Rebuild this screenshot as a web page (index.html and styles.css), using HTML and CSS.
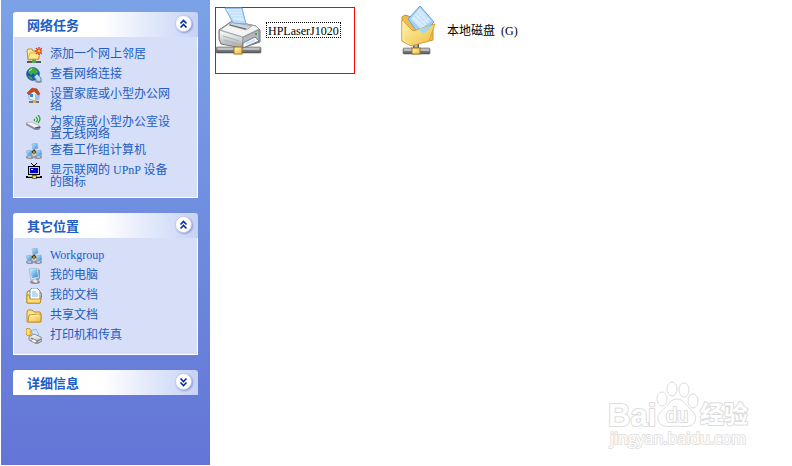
FILE: index.html
```
<!DOCTYPE html>
<html lang="zh-CN">
<head>
  <meta charset="UTF-8" />
  <meta name="viewport" content="width=device-width, initial-scale=1" />
  <title>网上邻居</title>
  <link rel="stylesheet" href="styles.css">
</head>
<body>

  <!-- Shared icon parts -->
  <svg class="defs" aria-hidden="true">
    <defs>
      <linearGradient id="yellow" x1="0" y1="0" x2="1" y2="1">
        <stop offset="0" stop-color="#fff6b0" />
        <stop offset="1" stop-color="#f0bd42" />
      </linearGradient>
      <linearGradient id="screen" x1="0" y1="0" x2="1" y2="1">
        <stop offset="0" stop-color="#c4f0ff" />
        <stop offset="1" stop-color="#2d86dc" />
      </linearGradient>
      <linearGradient id="grey" x1="0" y1="0" x2="0" y2="1">
        <stop offset="0" stop-color="#ffffff" />
        <stop offset="1" stop-color="#a4a8ac" />
      </linearGradient>
      <linearGradient id="pipe" x1="0" y1="0" x2="0" y2="1">
        <stop offset="0" stop-color="#b8bcc0" />
        <stop offset="1" stop-color="#4c5054" />
      </linearGradient>
      <symbol id="workgroup" viewBox="0 0 16 16">
        <path d="M8 6v3M4 10l4-2 4 2" fill="none" stroke="#333" stroke-width="2" />
        <ellipse cx="4" cy="14" rx="4" ry="2" fill="#8f91a6" />
        <ellipse cx="12" cy="14" rx="4" ry="2" fill="#8f91a6" />
        <path d="M6 1l5-1 1 5-5 2z" fill="url(#screen)" stroke="#90a9c8" stroke-width=".6" />
        <path d="M0 8l5-1 1 5-4 1z" fill="url(#screen)" stroke="#90a9c8" stroke-width=".6" />
        <path d="M10 8l5-1 1 5-5 1z" fill="url(#screen)" stroke="#90a9c8" stroke-width=".6" />
        <path d="M2 14h3M11 14h3" stroke="#eee" />
        <rect x="7" y="8" width="2" height="3" fill="#e5a51e" stroke="#664600" stroke-width=".5" />
      </symbol>
      <symbol id="up" viewBox="0 0 9 10">
        <path d="M1.500 4.500l3-3 3 3M1.500 8.500l3-3 3 3" fill="none" stroke="#00309c" stroke-width="1.600" />
      </symbol>
      <symbol id="down" viewBox="0 0 9 10">
        <path d="M1.500 1.500l3 3 3-3M1.500 5.500l3 3 3-3" fill="none" stroke="#00309c" stroke-width="1.600" />
      </symbol>
    </defs>
  </svg>

  <div class="window">
    <aside class="sidebar">

      <section class="panel">
        <div class="panel-head">
          <h2>网络任务</h2>
          <button type="button" class="toggle" aria-label="收起网络任务"><svg><use href="#up" /></svg></button>
        </div>
        <ul class="panel-body">
          <li><a href="#">
            <svg class="icon" viewBox="0 0 16 16">
              <path d="M1 15h14M8 11v4" stroke="#555b55" stroke-width="2" />
              <rect x="6" y="12" width="4" height="4" fill="#57a657" />
              <path d="M1 3l1-1h4l1 2h6v8l-11 1z" fill="url(#yellow)" stroke="#c38b2b" />
              <path d="M4 6h10l-2 6H2z" fill="#ffe98c" stroke="#d6a23c" stroke-width=".7" />
              <path d="M13 0v8M9 4h7M10 1l6 6M16 1l-6 6" stroke="#e8401c" stroke-width="1.500" />
              <circle cx="13" cy="4" r="1.500" fill="#ffcf45" />
            </svg>
            <span>添加一个网上邻居</span>
          </a></li>
          <li><a href="#">
            <svg class="icon" viewBox="0 0 16 16">
              <circle cx="7" cy="7" r="6.500" fill="#1d55bd" stroke="#345a94" stroke-width=".6" />
              <path d="M4 1c4-1 7 1 8 4L9 8 7 6 5 8 2 5zM2 9l4 1 1 3c-3-1-4-2-5-4z" fill="#3fae41" />
              <path d="M3 4l3-2" stroke="#c6f6b8" />
              <path d="M8 10l3-3 4 4v3l-3 1z" fill="#b9dcef" stroke="#6387a8" />
              <path d="M9 14l4 2 3-2" fill="none" stroke="#8e9bad" stroke-width="1.500" />
            </svg>
            <span>查看网络连接</span>
          </a></li>
          <li><a href="#">
            <svg class="icon" viewBox="0 0 16 16">
              <path d="M3 15h10M8 12v3" stroke="#777" stroke-width="2" />
              <path d="M3 6l6-3 4 4v5l-4 2-6-2z" fill="#e4f3ff" stroke="#8499b5" stroke-width=".7" />
              <path d="M9 7l4 1v4l-4 2z" fill="#9dbfe8" />
              <path d="M1 6l5-5 5 1 3 5-2 1-4-4-5 4z" fill="#c84721" stroke="#933017" stroke-width=".5" />
              <rect x="4" y="7" width="3" height="3" fill="#3885d6" />
              <rect x="7" y="13" width="3" height="3" fill="#e3b437" />
            </svg>
            <span>设置家庭或小型办公网络</span>
          </a></li>
          <li><a href="#">
            <svg class="icon" viewBox="0 0 16 16">
              <path d="M0 8l5-1 10 5-2 3-4 0-9-5z" fill="#8b8b9d" />
              <path d="M0 8l5-1 9 4-5 2z" fill="#f4f4fa" stroke="#a0a0b0" stroke-width=".5" />
              <path d="M9 13l5-1" stroke="#44486b" />
              <path d="M8 4q1 1 0 2M10 2q3 3 0 5M12 0q4 4 0 8" fill="none" stroke="#29a329" stroke-width="1.200" />
            </svg>
            <span>为家庭或小型办公室设置无线网络</span>
          </a></li>
          <li><a href="#">
            <svg class="icon"><use href="#workgroup" /></svg>
            <span>查看工作组计算机</span>
          </a></li>
          <li><a href="#">
            <svg class="icon" viewBox="0 0 16 16" shape-rendering="crispEdges">
              <path d="M5 0h1v1h1v1h2V1h1V0h1v1h-1v1h-1v1H7V2H6V1H5z" fill="#000" />
              <rect x="2" y="3" width="12" height="9" fill="#000" />
              <rect x="3" y="4" width="10" height="7" fill="#d0d0c8" />
              <rect x="4" y="5" width="8" height="5" fill="#0000c8" />
              <rect x="5" y="6" width="2" height="1" fill="#fff" />
              <rect x="7" y="12" width="2" height="2" fill="#000" />
              <rect x="0" y="13" width="16" height="2" fill="#000" />
              <rect x="2" y="13" width="12" height="1" fill="#b8b8a0" />
              <rect x="6" y="12" width="4" height="3" fill="#f5d820" stroke="#000" stroke-width=".5" />
            </svg>
            <span>显示联网的<span class="latin"> UPnP </span>设备的图标</span>
          </a></li>
        </ul>
      </section>

      <section class="panel">
        <div class="panel-head">
          <h2>其它位置</h2>
          <button type="button" class="toggle" aria-label="收起其它位置"><svg><use href="#up" /></svg></button>
        </div>
        <ul class="panel-body">
          <li><a href="#">
            <svg class="icon"><use href="#workgroup" /></svg>
            <span><span class="latin">Workgroup</span></span>
          </a></li>
          <li><a href="#">
            <svg class="icon" viewBox="0 0 16 16">
              <ellipse cx="9" cy="14" rx="5" ry="2" fill="#8f91a0" />
              <path d="M6 13l4-2 3 1-3 3z" fill="#e9eaf3" />
              <path d="M12 1l2 1v8l-2 3-2-1z" fill="#8895aa" />
              <path d="M3 1l9-1 1 10-8 2z" fill="#d9e7f4" stroke="#91a4bd" stroke-width=".6" />
              <path d="M4 2l7-1 1 8-6 1z" fill="url(#screen)" />
            </svg>
            <span>我的电脑</span>
          </a></li>
          <li><a href="#">
            <svg class="icon" viewBox="0 0 16 16">
              <path d="M1 5l1-2h3l9 1 2 2-2 9H1z" fill="url(#yellow)" stroke="#a97912" />
              <path d="M4 2l2-2h5l3 3v9H4z" fill="#fff" stroke="#5c93c7" />
              <path d="M6 4h4M6 6h6M6 8h6" stroke="#76b7e7" />
              <path d="M1 7h2l1 4h11l-1 4H1z" fill="#ffdf73" stroke="#b78720" stroke-width=".8" />
            </svg>
            <span>我的文档</span>
          </a></li>
          <li><a href="#">
            <svg class="icon" viewBox="0 0 16 16">
              <path d="M1 4l1-2h4l2 2h6l1 2v8H1z" fill="#fae38a" stroke="#bc8a26" />
              <path d="M3 7l12-1v7l-1 1H2z" fill="url(#yellow)" stroke="#c6922d" />
              <path d="M4 8l9-1" stroke="#fff9d0" />
            </svg>
            <span>共享文档</span>
          </a></li>
          <li><a href="#">
            <svg class="icon" viewBox="0 0 16 16">
              <path d="M5 3l5-2 3 6-5 1z" fill="#cbe6ff" stroke="#7da4ce" stroke-width=".7" />
              <path d="M3 9l5-3 7 3 1 4-5 3-8-4z" fill="url(#grey)" stroke="#777b83" stroke-width=".8" />
              <path d="M5 10l6 3 4-2M11 15v-2" fill="none" stroke="#686b72" />
              <path d="M7 11l4 2-2 2-4-2z" fill="#fff" stroke="#777" stroke-width=".5" />
              <path d="M0 1l3-1 2 2v5l-3 1-2-2z" fill="#ffd35a" stroke="#bf8520" stroke-width=".8" />
              <path d="M2 2v4" stroke="#fff6b4" />
            </svg>
            <span>打印机和传真</span>
          </a></li>
        </ul>
      </section>

      <section class="panel">
        <div class="panel-head">
          <h2>详细信息</h2>
          <button type="button" class="toggle" aria-label="展开详细信息"><svg><use href="#down" /></svg></button>
        </div>
      </section>

    </aside>

    <main class="content">
      <div class="files">
        <!-- Network printer -->
        <a href="#" class="file marked">
          <svg class="file-icon" viewBox="0 0 48 48">
            <path d="M25 36v6" stroke="#777" stroke-width="5" />
            <rect x="0" y="39" width="45" height="6" rx="1" fill="url(#pipe)" stroke="#666" stroke-width=".6" />
            <path d="M2 41h41" stroke="#e5e7e8" />
            <path d="M3 22l13-9 24 5 4 4v12L26 40 5 36 3 31z" fill="#c7c9cc" stroke="#6d7176" />
            <path d="M4 22l13-9 23 5 3 3-16 8z" fill="#f3f4f4" stroke="#888d92" stroke-width=".7" />
            <path d="M13 17l4-3 19 4-6 4z" fill="#d2d5d8" stroke="#8e9297" stroke-width=".7" />
            <path d="M9 0h17l4 16-13-1z" fill="#b8dcff" stroke="#78a8dc" />
            <path d="M10 1h15l3 12-10-1z" fill="#d9ecff" />
            <path d="M13 3h12M14 6h12M16 9h11" stroke="#b4d8fa" />
            <path d="M14 17l16 4" stroke="#5f646a" />
            <path d="M4 23l22 7v9L6 35 4 31z" fill="url(#grey)" />
            <path d="M27 29l16-7v11l-17 6z" fill="#b4b8bc" stroke="#747980" stroke-width=".6" />
            <path d="M7 28l16 5M8 32l15 4" stroke="#aeb1b5" />
            <path d="M27 35l12-6 4 4-16 7z" fill="#f5f9ff" stroke="#5c6570" stroke-width=".8" />
            <path d="M30 36l9-4" stroke="#cfe4f8" stroke-width="2" />
            <path d="M39 26h2" stroke="#2db83d" stroke-width="2" />
            <rect x="18" y="39" width="8" height="7" fill="url(#yellow)" stroke="#a77213" />
          </svg>
          <span class="file-name selected"><span class="latin">HPLaserJ1020</span></span>
        </a>

        <!-- Shared network drive -->
        <a href="#" class="file">
          <svg class="file-icon" viewBox="0 0 48 48">
            <path d="M21 32v10" stroke="#55595d" stroke-width="6" />
            <path d="M21 32v10" stroke="#b2b5b8" stroke-width="3" />
            <rect x="8" y="40" width="27" height="6" rx="1" fill="url(#pipe)" stroke="#666" stroke-width=".6" />
            <path d="M9 42h25" stroke="#ddd" />
            <path d="M7 9l3-2 6 2 2 4 20 3v16L15 37 7 33z" fill="#efbd4b" stroke="#c7902c" />
            <path d="M13 11L25-2l14 16-14 14z" fill="#a4d0f6" stroke="#65a5e1" />
            <path d="M16 11l9-11 11 13-10 8z" fill="#d6ebff" />
            <path d="M22 5l10 11M20 8l10 10M25 3l10 11" stroke="#9ccbf4" stroke-dasharray="1 1" />
            <path d="M7 12l11 11 22-7-6 17-18 5-9-5z" fill="url(#yellow)" stroke="#d7a13a" />
            <path d="M23 21l15-4-9 9z" fill="#a3d6f1" />
            <path d="M8 13v19l6 4" fill="none" stroke="#fff4b0" />
            <rect x="17" y="40" width="8" height="6" fill="url(#yellow)" stroke="#a77213" />
          </svg>
          <span class="file-name">本地磁盘<span class="latin">  (G)</span></span>
        </a>
      </div>

      <svg class="watermark" viewBox="0 0 148 72" role="img" aria-label="Baidu 经验">
        <g class="paw">
          <ellipse cx="54" cy="18" rx="5" ry="7" />
          <ellipse cx="64" cy="8" rx="5" ry="7" />
          <ellipse cx="76" cy="9" rx="5" ry="7" />
          <ellipse cx="85" cy="20" rx="5" ry="7" />
          <path d="M69 18c-6 0-8 5-12 9-5 4-8 8-7 12 2 7 9 7 19 6 10 1 16 1 18-5 2-5-1-9-6-13-4-4-6-9-12-9z" />
        </g>
        <text class="mark-bai" x="0" y="45">Bai</text>
        <text class="mark-du" x="58" y="41">du</text>
        <text class="mark-cn" x="92" y="42">经验</text>
        <text class="mark-url" x="2" y="63">jingyan.baidu.com</text>
      </svg>
    </main>
  </div>

</body>
</html>
```

FILE: styles.css
```
* {
  box-sizing: border-box;
}
body {
  margin: 0;
  background: #fff;
  font-family: "Noto Sans CJK SC", sans-serif;
  font-size: 12px;
  line-height: 12px;
}
a {
  color: inherit;
  text-decoration: none;
}
.defs {
  position: absolute;
  width: 0;
  height: 0;
}
.window {
  display: flex;
  min-height: 100vh;
  padding: 0 0 1px 1px;
}

/* Sidebar */
.sidebar {
  display: flex;
  flex-direction: column;
  gap: 15px;
  flex: none;
  width: 209px;
  padding: 12px;
  background: linear-gradient(#7ba2e7, #6375d6);
}
.panel-head {
  display: flex;
  align-items: center;
  justify-content: space-between;
  height: 25px;
  padding: 0 6px 0 14px;
  border-radius: 3px 3px 0 0;
  background: linear-gradient(to right, #fff 48%, #c6d3f7);
}
.panel-head h2 {
  margin: 0;
  color: #215dc6;
  font-size: 13px;
  line-height: 16px;
}
.toggle {
  display: flex;
  align-items: center;
  justify-content: center;
  width: 17px;
  height: 17px;
  margin-bottom: 2px;
  padding: 0;
  border: 1px solid #c4cce4;
  border-radius: 50%;
  background: #fff;
  box-shadow: 1px 1px 2px #8c9ccb;
  cursor: pointer;
}
.toggle svg {
  width: 9px;
  height: 10px;
}
.panel-body {
  display: flex;
  flex-direction: column;
  gap: 4px;
  margin: 0;
  padding: 10px 24px 10px 12px;
  border: 1px solid #fff;
  border-top: 0;
  background: #d6dff7;
  color: #215dc6;
  list-style: none;
}
.panel-body a {
  display: flex;
  gap: 8px;
  min-height: 16px;
}
.panel-body a:hover {
  text-decoration: underline;
}
.icon {
  flex: none;
  width: 16px;
  height: 16px;
}
.latin {
  font-family: "Liberation Serif", serif;
  line-height: 8px;
  white-space: pre-wrap;
}

/* File area */
.content {
  display: flex;
  flex: 1;
  flex-direction: column;
  justify-content: space-between;
  padding: 7px 36px 12px 5px;
}
.files {
  display: flex;
  flex-wrap: wrap;
  gap: 39px;
}
.file {
  display: flex;
  gap: 2px;
  width: 140px;
  height: 67px;
  border: 1px solid transparent;
  color: #000;
}
.file.marked {
  border-color: #f00;
}
.file-icon {
  flex: none;
  width: 48px;
  height: 48px;
  overflow: visible;
}
.file-name {
  align-self: flex-start;
  margin-top: 14px;
  padding: 1px;
  border: 1px solid transparent;
  white-space: nowrap;
}
.file-name.selected {
  border: 1px dotted #000;
}

/* Watermark */
.watermark {
  align-self: flex-end;
  width: 148px;
  height: 72px;
  overflow: visible;
}
.watermark text {
  fill: #fff;
  stroke: #dcdcdc;
  stroke-width: 2px;
  stroke-linejoin: round;
  paint-order: stroke;
}
.paw {
  fill: #fff;
  stroke: #dcdcdc;
}
.watermark .mark-bai {
  font: bold 31px "Liberation Sans", sans-serif;
}
.watermark .mark-du {
  font: 20px "Liberation Sans", sans-serif;
}
.watermark .mark-cn {
  font: bold 24px "Noto Sans CJK SC", sans-serif;
}
.watermark .mark-url {
  stroke: #e2e2e2;
  font: 16px "Open Sans", sans-serif;
}
```
